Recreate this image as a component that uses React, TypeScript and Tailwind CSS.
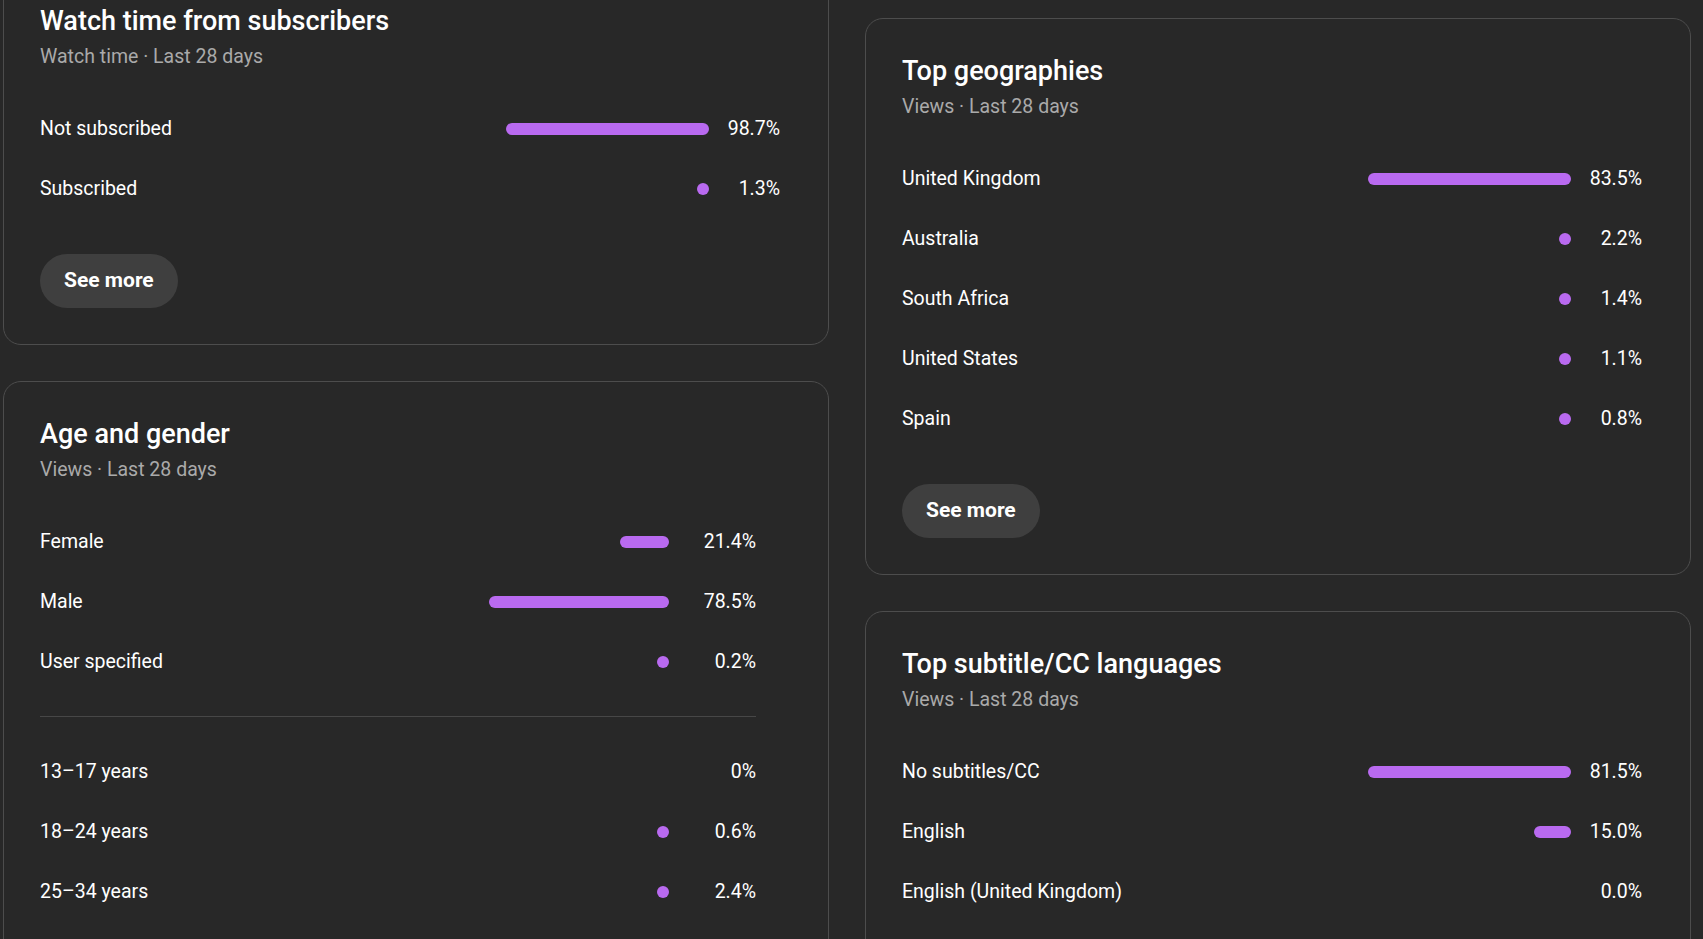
import React from "react";

type Row = { label: string; value: number; text: string };

interface CardProps {
  title: string;
  subtitle: string;
  rows: Row[];
  extraRows?: Row[];
  seeMore?: boolean;
  track?: number;
  pctWidth?: string;
  listPad?: string;
  className?: string;
}

function Bar({ value, max, track }: { value: number; max: number; track: number }) {
  if (value <= 0) return null;
  const w = Math.max(12, (track * value) / max);
  return <div className="h-3 rounded-full bg-[#b96af0]" style={{ width: w }} />;
}

function Rows({ rows, max, track, pctWidth }: { rows: Row[]; max: number; track: number; pctWidth: string }) {
  return (
    <div>
      {rows.map((r) => (
        <div key={r.label} className="flex h-[60px] items-center">
          <span className="flex-1 text-[19.5px] text-white">{r.label}</span>
          <div className="flex justify-end" style={{ width: track }}>
            <Bar value={r.value} max={max} track={track} />
          </div>
          <span className={`${pctWidth} text-right text-[19.5px] text-white`}>{r.text}</span>
        </div>
      ))}
    </div>
  );
}

function Card({
  title,
  subtitle,
  rows,
  extraRows,
  seeMore,
  track = 203,
  pctWidth = "w-[71px]",
  listPad = "pr-3",
  className = "",
}: CardProps) {
  const max = Math.max(...rows.map((r) => r.value));
  const extraMax = extraRows ? Math.max(...extraRows.map((r) => r.value)) : 1;
  return (
    <section
      className={`w-[826px] rounded-[18px] border border-[#4d4d4d] bg-[#282828] px-9 pt-[37px] pb-[36px] ${className}`}
    >
      <h3 className="text-[27px] font-medium leading-[30px] text-white">{title}</h3>
      <p className="mt-[7px] text-[19.5px] leading-[28px] text-[#aaaaaa]">{subtitle}</p>
      <div className={`mt-[28px] ${listPad}`}>
        <Rows rows={rows} max={max} track={track} pctWidth={pctWidth} />
        {extraRows && (
          <>
            <div className="mt-6 mb-[25px] h-px bg-[#474747]" />
            <Rows rows={extraRows} max={Math.max(extraMax, 50)} track={track} pctWidth={pctWidth} />
          </>
        )}
      </div>
      {seeMore && (
        <button className="mt-[35px] flex h-[54px] items-center rounded-full bg-[#3f3f3f] px-6 text-[21px] font-bold text-white">
          See more
        </button>
      )}
    </section>
  );
}

export default function App() {
  return (
    <div
      className="min-h-screen overflow-hidden bg-[#282828] pl-[3px]"
      style={{ fontFamily: 'Roboto, "Liberation Sans", sans-serif' }}
    >
      <div className="flex items-start gap-9">
        <div className="-mt-[32px] flex flex-col gap-9">
          <Card
            title="Watch time from subscribers"
            subtitle="Watch time · Last 28 days"
            rows={[
              { label: "Not subscribed", value: 98.7, text: "98.7%" },
              { label: "Subscribed", value: 1.3, text: "1.3%" },
            ]}
            seeMore
          />
          <Card
            title="Age and gender"
            subtitle="Views · Last 28 days"
            track={180}
            pctWidth="w-[87px]"
            listPad="pr-9"
            rows={[
              { label: "Female", value: 21.4, text: "21.4%" },
              { label: "Male", value: 78.5, text: "78.5%" },
              { label: "User specified", value: 0.2, text: "0.2%" },
            ]}
            extraRows={[
              { label: "13–17 years", value: 0, text: "0%" },
              { label: "18–24 years", value: 0.6, text: "0.6%" },
              { label: "25–34 years", value: 2.4, text: "2.4%" },
              { label: "35–44 years", value: 14.2, text: "14.2%" },
              { label: "45–54 years", value: 27.9, text: "27.9%" },
            ]}
          />
        </div>
        <div className="mt-[18px] flex flex-col gap-9">
          <Card
            title="Top geographies"
            subtitle="Views · Last 28 days"
            rows={[
              { label: "United Kingdom", value: 83.5, text: "83.5%" },
              { label: "Australia", value: 2.2, text: "2.2%" },
              { label: "South Africa", value: 1.4, text: "1.4%" },
              { label: "United States", value: 1.1, text: "1.1%" },
              { label: "Spain", value: 0.8, text: "0.8%" },
            ]}
            seeMore
          />
          <Card
            title="Top subtitle/CC languages"
            subtitle="Views · Last 28 days"
            rows={[
              { label: "No subtitles/CC", value: 81.5, text: "81.5%" },
              { label: "English", value: 15.0, text: "15.0%" },
              { label: "English (United Kingdom)", value: 0, text: "0.0%" },
              { label: "Welsh", value: 0, text: "0.0%" },
            ]}
          />
        </div>
      </div>
    </div>
  );
}
